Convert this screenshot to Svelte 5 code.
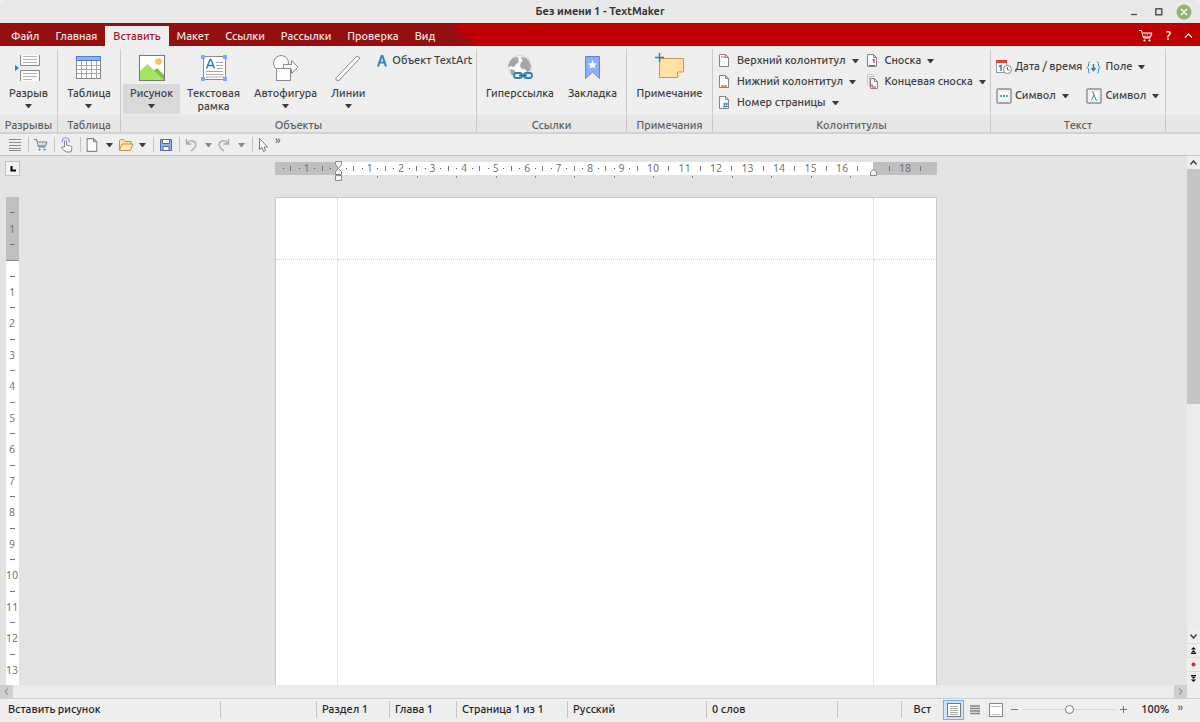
<script>
  const menus = ['Файл', 'Главная', 'Вставить', 'Макет', 'Ссылки', 'Рассылки', 'Проверка', 'Вид'];
  let active = $state('Вставить');
  let zoom = $state(100);
  let height = $state(722);

  const cm = 31.5;
  const hNumbers = [-1, 1, 2, 3, 4, 5, 6, 7, 8, 9, 10, 11, 12, 13, 14, 15, 16, 18];
  const hHalves = Array.from({ length: 21 }, (_, i) => i - 1.5);
  const hDots = [-1.75];
  for (let i = -1; i < 10; i++) {
    hDots.push(i - 0.25, i + 0.25);
  }
  const tabStops = Array.from({ length: 13 }, (_, i) => (i + 1) * 1.25);

  // only the numbers that fit into the visible part of the page
  let rows = $derived(Math.max(1, Math.floor((height - 308) / cm)));
  let vNumbers = $derived(Array.from({ length: rows }, (_, i) => i + 1));

  const cells = [
    { text: 'Вставить рисунок', w: 221 },
    { text: '', w: 96 },
    { text: 'Раздел 1', w: 73 },
    { text: 'Глава 1', w: 67 },
    { text: 'Страница 1 из 1', w: 111 },
    { text: 'Русский', w: 139 },
    { text: '0 слов', w: 131 }
  ];
</script>

<svelte:window bind:innerHeight={height} />

{#snippet arrow()}
  <svg class="arrow" width="7" height="4" viewBox="0 0 7 4"><path d="M0 0h7L4 4H3z" fill="currentColor" /></svg>
{/snippet}

{#snippet sheet()}
  <path d="M1.500 1.500h6l3 3v9h-9z" fill="#fafafa" stroke="#858585" />
  <path d="M7.500 1.500v3h3" fill="none" stroke="#858585" />
{/snippet}

{#snippet cart(wheel)}
  <path d="M1 2.500h2.500l2 7.500h7M4.500 5h9.500l-1.500 4H5.300" fill="none" stroke="currentColor" />
  <path d="M7 5v4M9.500 5v4M12 5v4" stroke="currentColor" stroke-width=".4" />
  <circle cx="6.500" cy="12.500" r="1.100" fill={wheel} /><circle cx="11.500" cy="12.500" r="1.100" fill={wheel} />
{/snippet}

{#snippet bigIcon(name)}
  <svg class="big-icon" width="30" height="30" viewBox="0 0 30 30">
    {#if name === 'break'}
      <path d="M6.500 2v10.500h19V2M6.500 28V17.500h19V28" fill="#fbfbfb" stroke="#8a8a8a" />
      <path d="M9 3.500h14M9 6.500h14M9 9.500h14M9 20.500h14M9 23.500h14M9 26.500h9" stroke="#b5b5b5" />
      <path d="M1 12l4 3-4 3z" fill="#2b80b9" />
    {:else if name === 'table'}
      <rect x="2.500" y="3.500" width="24" height="22" fill="#fff" stroke="#858585" />
      <path d="M3 12.500h23M3 16.500h23M3 20.500h23M7.500 8v17M12.500 8v17M17.500 8v17M22.500 8v17" stroke="#a8a8a8" />
      <rect x="2.500" y="3.500" width="24" height="4" fill="#8bb1fb" stroke="#527ccc" />
    {:else if name === 'picture'}
      <rect x="2.500" y="2.500" width="25" height="25" fill="#fff" stroke="#777" />
      <circle cx="21.500" cy="8.500" r="3.200" fill="#ffbf4d" />
      <path d="M15 19l5-4 7 7v5H15z" fill="#82be4e" />
      <path d="M3 18l7.500-7L27 27H3z" fill="#a3e563" />
    {:else if name === 'frame'}
      <rect x="4.500" y="3.500" width="22" height="23" fill="#fff" stroke="#8a8a8a" />
      <path d="M17 9.500h7M17 12.500h7M18 15.500h6M7 18.500h17M7 21.500h17M7 24h17" stroke="#aaa" />
      <path d="M7.500 15.500L11 6.500h1l3.500 9M9 12.500h5" fill="none" stroke="#2b80b9" stroke-width="1.500" />
      <g fill="#7fa7ff"><rect x="2" y="2" width="4" height="4" /><rect x="24" y="2" width="4" height="4" /><rect x="2" y="24" width="4" height="4" /><rect x="24" y="24" width="4" height="4" /></g>
    {:else if name === 'shape'}
      <circle cx="10" cy="10" r="7.500" fill="#fdfdfd" stroke="#8a8a8a" />
      <path d="M12.500 11.500h8v-4l6.500 6.500-6.500 6.500v-4h-8z" fill="#fdfdfd" stroke="#8a8a8a" />
      <rect x="5.500" y="15.500" width="14" height="12" fill="#fdfdfd" stroke="#8a8a8a" />
    {:else if name === 'lines'}
      <path d="M3 25L24 3l3 2L6 27.500l-3-.5z" fill="#fff" stroke="#8a8a8a" />
    {:else if name === 'link'}
      <circle cx="15" cy="14" r="11.500" fill="#f9f9f9" stroke="#d5d5d5" />
      <path d="M5 8l3-3 4-1 2 1-1 2 1 2-3 2-1 2-2 1-2-1-2 1-1-1zM16 4l5 1 3 3 2 5-1 5-3 1-2-3-3 0-2-3 1-4 2-1-2-3zM5 16l4 1 2 3-2 3-3-2z" fill="#a6a6a6" />
      <g fill="#eee" stroke="#2b80b9" stroke-width="1.800"><rect x="9" y="20" width="8" height="5" rx="2.500" /><rect x="19" y="20" width="8" height="5" rx="2.500" /></g>
      <path d="M14 22.500h8" stroke="#1b65a0" stroke-width="1.600" />
    {:else if name === 'bookmark'}
      <path d="M8.500 3.500h14v22l-7-6.500-7 6.500z" fill="#8bafff" stroke="#6a86bd" />
      <path d="M15.500 7l1.300 3.200 3.400.2-2.600 2.100.9 3.300-3-1.800-3 1.800.9-3.300-2.600-2.100 3.400-.2z" fill="#fff" />
    {:else if name === 'note'}
      <path d="M4.500 5.500h24v13l-6 6h-18z" fill="#ffe2a3" stroke="#cb9551" />
      <path d="M22.500 24.500v-5.500h6" fill="#fff0cd" stroke="#cb9551" />
      <path d="M0 4.500h9M4.500 0v9" stroke="#2b80b9" stroke-width="1.500" />
    {/if}
  </svg>
{/snippet}

{#snippet big(name, label, drop = false, second = '')}
  <button class="big" class:hot={name === 'picture'}>
    {@render bigIcon(name)}
    <span class="cap">
      <span>{label}</span>
      {#if second}<span>{second}</span>{/if}
      {#if drop}{@render arrow()}{/if}
    </span>
  </button>
{/snippet}

{#snippet small(name, label, drop = true)}
  <button class="small">
    <svg width="16" height="16" viewBox="0 0 16 16">
      {#if name === 'header'}
        {@render sheet()}<path d="M3 4h4" stroke="#ff8d60" stroke-width="1.500" />
      {:else if name === 'footer'}
        {@render sheet()}<path d="M3 12h6" stroke="#ff8d60" stroke-width="2" />
      {:else if name === 'number'}
        {@render sheet()}<path d="M7 7.500l-1 5M9 7.500l-1 5M5 9h5M5 11.500h5" stroke="#2b80b9" stroke-width=".9" />
      {:else if name === 'footnote'}
        {@render sheet()}<path d="M6.500 7l1.500-.5V10M3 12.500h6" fill="none" stroke="#d92b2b" stroke-width="1.200" />
      {:else if name === 'endnote'}
        <path d="M1.500 11V.500h5l1 1" fill="none" stroke="#ccc" />
        <path d="M3.500 13V2.500h5" fill="none" stroke="#bbb" />
        <path d="M4.500 4.500h4l3 3v7h-7z" fill="#fafafa" stroke="#858585" /><path d="M8.500 4.500v3h3" fill="none" stroke="#858585" />
        <path d="M6 10v3h4" fill="none" stroke="#d92b2b" />
      {:else if name === 'date'}
        <rect x=".5" y="1.500" width="10" height="12" fill="#fff" stroke="#999" /><path d="M0 1h11v3H0z" fill="#d8433c" />
        <path d="M3 7.500l2-1V12" fill="none" stroke="#2b80b9" stroke-width="1.400" />
        <circle cx="11.500" cy="10.500" r="4" fill="#fff" stroke="#858585" /><path d="M11.500 8v3h2" fill="none" stroke="#2b80b9" />
      {:else if name === 'field'}
        <path d="M4 3H3.500q-1 0-1 1.500V7L1 8.500 2.500 10v2.500q0 1.500 1 1.500H4M11 3h.5q1 0 1 1.500V7L14 8.500 12.500 10v2.500q0 1.500-1 1.500H11" fill="none" stroke="#3a87bd" />
        <path d="M7.500 5v6M5.500 9l2 2.500 2-2.500" fill="none" stroke="#2b80b9" stroke-width="1.500" />
      {:else if name === 'dots' || name === 'lambda'}
        <rect x="1" y="1" width="14" height="14" rx="1" fill="#fff" stroke="#8a8a8a" stroke-width="1.400" /><rect x="3" y="3" width="10" height="10" fill="#fff" stroke="#ccc" stroke-width=".6" />
        {#if name === 'dots'}<path d="M4 8h2M7 8h2M10 8h2" stroke="#2b80b9" stroke-width="1.600" />
        {:else}<path d="M6 4h1l3 8h1M8 7l-2.500 5" fill="none" stroke="#2b80b9" />{/if}
      {/if}
    </svg>
    <span>{label}</span>
    {#if drop}{@render arrow()}{/if}
  </button>
{/snippet}

<div class="app">
  <header class="title">
    <h1>Без имени 1 - TextMaker</h1>
    <div class="window-buttons">
      <button aria-label="Свернуть"><svg width="8" height="16" viewBox="0 0 8 16"><path d="M1 10.500h6" stroke="#444" stroke-width="1.200" /></svg></button>
      <button aria-label="Развернуть"><svg width="8" height="16" viewBox="0 0 8 16"><rect x=".8" y="4.800" width="6" height="6" fill="none" stroke="#333" stroke-width="1.200" /></svg></button>
      <button aria-label="Закрыть"><svg width="16" height="16" viewBox="0 0 16 16"><circle cx="8" cy="8" r="7.500" fill="#92b372" /><path d="M5 5l6 6M11 5l-6 6" stroke="#fff" stroke-width="1.300" /></svg></button>
    </div>
  </header>

  <nav class="menu">
    <div class="tabs">
      {#each menus as m}
        <button class:active={active === m} onclick={() => (active = m)}>{m}</button>
      {/each}
    </div>
    <div class="menu-right">
      <button aria-label="Магазин"><svg width="15" height="15" viewBox="0 0 15 15">{@render cart('#fff')}</svg></button>
      <button class="help">?</button>
      <button aria-label="Скрыть ленту"><svg width="9" height="9" viewBox="0 0 9 9"><path d="M1 6.500L4.500 3 8 6.500" fill="none" stroke="#fff" stroke-width="1.200" /></svg></button>
    </div>
  </nav>

  <div class="ribbon">
    <section class="group g-break">
      <div class="tools">{@render big('break', 'Разрыв', true)}</div>
      <h2>Разрывы</h2>
    </section>
    <section class="group g-table">
      <div class="tools">{@render big('table', 'Таблица', true)}</div>
      <h2>Таблица</h2>
    </section>
    <section class="group g-objects">
      <div class="tools">
        {@render big('picture', 'Рисунок', true)}
        {@render big('frame', 'Текстовая', false, 'рамка')}
        {@render big('shape', 'Автофигура', true)}
        {@render big('lines', 'Линии', true)}
        <div class="stack">
          <button class="small">
            <svg width="14" height="14" viewBox="0 0 14 14"><path d="M3 12.500L6.500 2h1L11 12.500M4.500 8.500h5" fill="none" stroke="#3988bd" stroke-width="2.200" /></svg>
            <span>Объект TextArt</span>
          </button>
        </div>
      </div>
      <h2>Объекты</h2>
    </section>
    <section class="group g-links">
      <div class="tools">
        {@render big('link', 'Гиперссылка')}
        {@render big('bookmark', 'Закладка')}
      </div>
      <h2>Ссылки</h2>
    </section>
    <section class="group g-notes">
      <div class="tools">{@render big('note', 'Примечание')}</div>
      <h2>Примечания</h2>
    </section>
    <section class="group g-headers">
      <div class="tools">
        <div class="stack">
          {@render small('header', 'Верхний колонтитул')}
          {@render small('footer', 'Нижний колонтитул')}
          {@render small('number', 'Номер страницы')}
        </div>
        <div class="stack">
          {@render small('footnote', 'Сноска')}
          {@render small('endnote', 'Концевая сноска')}
        </div>
      </div>
      <h2>Колонтитулы</h2>
    </section>
    <section class="group g-text">
      <div class="tools">
        <div class="stack loose">
          {@render small('date', 'Дата / время', false)}
          {@render small('dots', 'Символ')}
        </div>
        <div class="stack loose">
          {@render small('field', 'Поле')}
          {@render small('lambda', 'Символ')}
        </div>
      </div>
      <h2>Текст</h2>
    </section>
    <div class="group rest"><div class="tools"></div><div class="band"></div></div>
  </div>

  <div class="quick">
    <button aria-label="Меню"><svg width="16" height="16" viewBox="0 0 16 16"><path d="M2 2.500h12M2 5.500h12M2 8.500h12M2 11.500h12M2 13.500h12" stroke="#8c8c8c" /></svg></button>
    <i></i>
    <button class="blue" aria-label="Магазин"><svg width="16" height="16" viewBox="0 0 16 16">{@render cart('#3a8bd0')}</svg></button>
    <i></i>
    <button aria-label="Сенсорный режим"><svg width="16" height="16" viewBox="0 0 16 16"><path d="M3.500 5.500a3.500 3.500 0 1 1 6.500 0" fill="none" stroke="#7fa7ff" stroke-width="1.300" /><path d="M5.500 10V4q1-1 2 0v4l4 1q1.500.5 1.500 2l-1 4H7L2.500 11q0-1.500 1.500-1z" fill="#fafafa" stroke="#858585" /></svg></button>
    <i></i>
    <button aria-label="Создать"><svg width="16" height="16" viewBox="0 0 14 15">{@render sheet()}</svg></button>
    <button class="drop" aria-label="Шаблоны">{@render arrow()}</button>
    <button aria-label="Открыть"><svg width="16" height="16" viewBox="0 0 16 16"><path d="M1.500 13V3.500l1-1h3l1.500 2h6V7" fill="#ffe2a3" stroke="#c98f47" /><path d="M1.500 13.500L4 7h11l-2.500 6.500z" fill="#ffe8b8" stroke="#c98f47" /></svg></button>
    <button class="drop" aria-label="Последние файлы">{@render arrow()}</button>
    <i></i>
    <button aria-label="Сохранить"><svg width="16" height="16" viewBox="0 0 16 16"><path d="M2.500 2.500h11v11h-11z" fill="#8bafff" stroke="#4b6fae" /><path d="M4.500 2.500h7v4h-7zM5 9.500h6v4H5z" fill="#fff" stroke="#667" /></svg></button>
    <i></i>
    <button class="off" aria-label="Отменить"><svg width="16" height="16" viewBox="0 0 16 16"><path d="M2.500 2v5h5M3 6.500q3-4 7-2t0 7L7 14" fill="none" stroke="#aaa" stroke-width="1.400" /></svg></button>
    <button class="drop off" aria-label="Список отмены">{@render arrow()}</button>
    <button class="off" aria-label="Вернуть"><svg width="16" height="16" viewBox="0 0 16 16"><path d="M11.500 2v5h-5M11 6.500q-3-4-7-2t0 7L7 14" fill="none" stroke="#aaa" stroke-width="1.400" /></svg></button>
    <button class="drop off" aria-label="Список возврата">{@render arrow()}</button>
    <i></i>
    <button aria-label="Выделение"><svg width="16" height="16" viewBox="0 0 16 16"><path d="M2.500 1.500v11l2.500-2 1.500 4 2-1-1.500-3.500h3.500z" fill="#fff" stroke="#777" /></svg></button>
    <button class="more">»</button>
  </div>

  <div class="work">
    <div class="canvas">
      <div class="top">
        <button class="tab-kind" aria-label="Тип табуляции"><svg width="13" height="13" viewBox="0 0 13 13"><path d="M5.500 4v4.500H10" fill="none" stroke="#000" stroke-width="2" /></svg></button>
        <svg class="h-ruler" width="662" height="26" viewBox="0 0 662 26">
          <rect x="0" y="5" width="662" height="13" fill="#bfbfbf" />
          <rect x="63" y="5" width="535" height="13" fill="#fff" />
          {#each hDots as d}<rect x={Math.round(63 + d * cm)} y="11" width="1" height="1" fill="#555" />{/each}
          {#each hHalves as d}<rect x={Math.round(62.5 + d * cm)} y="9" width="1" height="5" fill="#777" />{/each}
          {#each hNumbers as n}<text x={63 + n * cm} y="15">{Math.abs(n)}</text>{/each}
          {#each tabStops as t}<rect x={Math.round(63 + t * cm)} y="19" width="1" height="2" fill="#888" />{/each}
          <path d="M60.500 4.500h6v3l-3 4-3-4zM63.500 11.500l3 3v3h-6v-3zM60.500 18.500h6v5h-6z" fill="#f4f4f4" stroke="#8a8a8a" />
          <path d="M595.500 15.500l3-3.500 3 3.500v3h-6z" fill="#f4f4f4" stroke="#8a8a8a" />
        </svg>
      </div>
      <div class="bottom">
        <div class="v-holder">
          <svg class="v-ruler" width="13" height="64" viewBox="0 0 13 64">
            <rect x="0" y="0" width="13" height="64" fill="#bfbfbf" />
            <rect x="0" y="63" width="13" height="1" fill="#8a8a8a" />
            <rect x="4" y="15" width="5" height="1" fill="#777" />
            <rect x="4" y="47" width="5" height="1" fill="#777" />
            <text x="6" y="36">1</text>
          </svg>
          <svg class="v-ruler white" width="13" height={rows * cm + 14} viewBox="0 0 13 {rows * cm + 14}">
            {#each vNumbers as n}
              <rect x="4" y={Math.round(n * cm - 17)} width="5" height="1" fill="#777" />
              <text x="6" y={3 + n * cm}>{n}</text>
            {/each}
          </svg>
        </div>
        <div class="page" contenteditable="true" role="textbox" aria-label="Документ" tabindex="0">
          <span></span><span></span><span></span>
          <span></span><span></span><span></span>
        </div>
      </div>
    </div>
    <div class="v-scroll">
      <button aria-label="Вверх"><svg width="9" height="9" viewBox="0 0 9 9"><path d="M1.500 6.500l3-3.500 3 3.500" fill="none" stroke="#444" stroke-width="1.500" /></svg></button>
      <div class="track"><div class="thumb"></div></div>
      <button aria-label="Вниз"><svg width="9" height="9" viewBox="0 0 9 9"><path d="M1.500 2.500l3 3.500 3-3.500" fill="none" stroke="#444" stroke-width="1.500" /></svg></button>
      <button class="jump" aria-label="Назад"><svg width="7" height="7" viewBox="0 0 7 7"><path d="M3.500 0L6 2.500H1zM3.500 3L6 5.500H1zM1 6h5v1H1z" /></svg></button>
      <button class="jump" aria-label="Объект"><svg width="7" height="7" viewBox="0 0 7 7"><circle cx="3.500" cy="3.500" r="2" fill="#d9262b" /></svg></button>
      <button class="jump" aria-label="Далее"><svg width="7" height="7" viewBox="0 0 7 7"><path d="M1 0h5v1H1zM1 1.500h5L3.500 4zM1 4.500h5L3.500 7z" /></svg></button>
    </div>
  </div>

  <div class="h-scroll">
    <button aria-label="Влево"><svg width="9" height="9" viewBox="0 0 9 9"><path d="M6 1.500L3 4.500l3 3" fill="none" stroke="#999" stroke-width="1.200" /></svg></button>
    <div class="track"></div>
    <button aria-label="Вправо"><svg width="9" height="9" viewBox="0 0 9 9"><path d="M3 1.500l3 3-3 3" fill="none" stroke="#999" stroke-width="1.200" /></svg></button>
    <span class="corner"></span>
  </div>

  <footer class="status">
    {#each cells as c}
      <span class="cell" style="width: {c.w}px">{c.text}</span>
    {/each}
    <span class="cell grow"></span>
    <span class="ins">Вст</span>
    <button class="view on" aria-label="Обычный"><svg width="16" height="16" viewBox="0 0 16 16"><rect x="1.500" y="1.500" width="13" height="13" fill="#fff" stroke="#777" /><path d="M4 4.500h8M4 6.500h8M4 8.500h8M4 10.500h8M4 12.500h8" stroke="#aaa" /></svg></button>
    <button class="view" aria-label="Черновик"><svg width="16" height="16" viewBox="0 0 16 16"><path d="M3 4h10M3 6.500h10M3 9h10M3 11.500h10" stroke="#858585" stroke-width="1.500" /></svg></button>
    <button class="view" aria-label="Страница"><svg width="16" height="16" viewBox="0 0 16 16"><rect x="1.500" y="1.500" width="13" height="13" fill="#fff" stroke="#858585" /><path d="M3 4.500h10M4 12.500h8" stroke="#bbb" /></svg></button>
    <button class="step" aria-label="Уменьшить"><svg width="7" height="7" viewBox="0 0 7 7"><path d="M0 3.500h7" stroke="#777" /></svg></button>
    <input type="range" min="0" max="200" bind:value={zoom} aria-label="Масштаб" />
    <button class="step" aria-label="Увеличить"><svg width="7" height="7" viewBox="0 0 7 7"><path d="M0 3.500h7M3.500 0v7" stroke="#777" /></svg></button>
    <span class="percent">{zoom}%</span>
    <button class="more">»</button>
  </footer>
</div>

<style>
  :global(body) {
    background: #eee;
  }

  .app {
    display: flex;
    flex-direction: column;
    height: 100vh;
    overflow: hidden;
    font-family: "Ubuntu", "Noto Sans", "Open Sans", sans-serif;
    font-size: 11px;
    font-weight: 500;
    line-height: 13px;
    color: #3c3c3c;
    background: #eee;
  }

  .app * {
    box-sizing: border-box;
  }

  button {
    display: flex;
    align-items: center;
    justify-content: center;
    padding: 0;
    border: 0;
    background: none;
    font: inherit;
    color: inherit;
    white-space: nowrap;
  }

  svg {
    display: block;
    flex: none;
  }

  h1, h2 {
    margin: 0;
    font-size: 11px;
  }

  /* title bar */
  .title {
    display: grid;
    grid-template-columns: 1fr auto 1fr;
    align-items: center;
    flex: none;
    height: 23px;
    background: #e8e8e8;
    border-radius: 6px 6px 0 0;
  }

  .title h1 {
    grid-column: 2;
    font-weight: 600;
    color: #333;
  }

  .window-buttons {
    display: flex;
    justify-content: flex-end;
    gap: 17px;
    padding-right: 8px;
  }

  .window-buttons button:last-child {
    margin-left: -4px;
  }

  /* menu */
  .menu {
    display: flex;
    justify-content: space-between;
    flex: none;
    height: 23px;
    background: #c00000;
    border-top: 1px solid #b00000;
  }

  .tabs {
    display: flex;
    padding: 2px 32px 0 3px;
    background: #941010;
    clip-path: polygon(0 0, calc(100% - 24px) 0, 100% 100%, 0 100%);
  }

  .tabs button {
    padding: 0 8px;
    color: #f5e6e6;
  }

  .tabs .active {
    background: #eee;
    color: #a81414;
  }

  .menu-right {
    display: flex;
    gap: 13px;
    padding-right: 7px;
    color: #fff;
  }

  .help {
    font-size: 13px;
  }

  /* ribbon */
  .ribbon {
    display: flex;
    flex: none;
    height: 88px;
    padding-top: 3px;
    border-bottom: 2px solid #d2d2d2;
  }

  .group {
    display: flex;
    flex-direction: column;
    flex: none;
    border-right: 1px solid #c9c9c9;
  }

  .g-break { width: 58px; }
  .g-table { width: 63px; }
  .g-objects { width: 356px; }
  .g-links { width: 150px; }
  .g-notes { width: 86px; }
  .g-headers { width: 278px; }
  .g-text { width: 175px; }

  .rest {
    flex: 1;
    border-right: 0;
  }

  .group h2,
  .band {
    height: 17px;
    padding-top: 4px;
    background: #e6e6e6;
    font-weight: inherit;
    text-align: center;
    color: #5c5c5c;
  }

  .tools {
    display: flex;
    flex: 1;
    justify-content: center;
  }

  .big {
    flex-direction: column;
    justify-content: flex-start;
    padding-top: 4px;
  }

  .cap {
    display: flex;
    flex-direction: column;
    align-items: center;
    height: 30px;
    margin-top: 1px;
    padding: 3px 7px 0;
  }

  .cap .arrow {
    margin-top: 4px;
  }

  .hot .cap {
    background: #d9d9d9;
  }

  .g-objects .tools {
    justify-content: flex-start;
    padding-left: 2px;
  }

  .stack {
    display: flex;
    flex-direction: column;
    padding-top: 1px;
  }

  .g-objects .stack {
    margin-left: 1px;
  }

  .stack.loose {
    gap: 8px;
    padding-top: 7px;
  }

  .small {
    justify-content: flex-start;
    gap: 3px;
    height: 21px;
    padding: 0 2px;
  }

  .small .arrow {
    margin: 1px 0 0 3px;
  }

  .g-headers .tools,
  .g-text .tools {
    justify-content: flex-start;
    padding-left: 3px;
  }

  .g-headers .stack + .stack {
    margin-left: 3px;
  }

  /* quick access bar */
  .quick {
    display: flex;
    align-items: center;
    flex: none;
    height: 22px;
    padding-left: 7px;
    border-bottom: 1px solid #c4c4c4;
  }

  .quick i {
    width: 1px;
    height: 15px;
    margin: 0 4px 0 5px;
    background: #c4c4c4;
  }

  .quick .drop + i {
    margin-left: 2px;
  }

  .drop {
    width: 17px;
  }

  .blue {
    color: #6f7f8c;
  }

  .off {
    color: #888;
  }

  .more {
    align-self: flex-start;
    padding: 0 2px;
    color: #666;
  }

  /* document area */
  .work {
    display: flex;
    flex: 1;
    min-height: 0;
  }

  .canvas {
    display: flex;
    flex-direction: column;
    flex: 1;
    min-width: 0;
    background: #e3e3e3;
  }

  .top {
    display: grid;
    grid-template-columns: 25px 1fr;
    flex: none;
    height: 41px;
    padding-top: 1px;
  }

  .tab-kind {
    width: 15px;
    height: 15px;
    margin: 4px 0 0 5px;
    background: #f2f2f2;
    border: 1px solid #c2c2c2;
  }

  .h-ruler {
    margin: 0 auto;
  }

  .bottom {
    display: grid;
    grid-template-columns: 25px 1fr;
    grid-template-rows: minmax(0, 1fr);
    flex: 1;
    min-height: 0;
    overflow: hidden;
  }

  .v-holder {
    width: 13px;
    margin-left: 6px;
    background: #fff;
  }

  text {
    font-size: 11px;
    font-weight: 400;
    fill: #6c6c6c;
    text-anchor: middle;
  }

  .page {
    display: grid;
    grid-template: 62px 1fr / 62px 1fr 62px;
    width: 662px;
    height: 935px;
    margin: 0 auto;
    background: #fff;
    border: 1px solid #c8c8c8;
    outline: none;
  }

  .page span {
    border: 0 dotted #d0d0d0;
  }

  .page span:nth-child(-n + 3) {
    border-bottom-width: 1px;
  }

  .page span:not(:nth-child(3n)) {
    border-right-width: 1px;
  }

  .v-scroll {
    display: flex;
    flex-direction: column;
    width: 13px;
  }

  .v-scroll button {
    height: 13px;
    flex: none;
  }

  .v-scroll .jump {
    height: 14px;
    border-top: 1px solid #ddd;
  }

  .track {
    flex: 1;
    background: #ebebeb;
  }

  .thumb {
    height: 51%;
    background: #c4c4c4;
  }

  .h-scroll {
    display: flex;
    flex: none;
    height: 13px;
  }

  .h-scroll button {
    width: 13px;
    background: #cfcfcf;
  }

  .corner {
    width: 13px;
  }

  /* status bar */
  .status {
    display: flex;
    align-items: center;
    flex: none;
    height: 24px;
    padding-bottom: 2px;
    border-top: 1px solid #cfcfcf;
    color: #222;
  }

  .cell {
    flex: none;
    height: 17px;
    padding-left: 5px;
    line-height: 16px;
    white-space: nowrap;
    border-right: 1px solid #c4c4c4;
  }

  .cell:first-child {
    padding-left: 8px;
  }

  .cell.grow {
    flex: 1;
  }

  .ins {
    padding: 0 12px;
  }

  .view {
    width: 21px;
    height: 20px;
  }

  .view.on {
    background: #cfe3fa;
    border: 1px solid #78aee8;
  }

  .step {
    width: 17px;
  }

  input[type="range"] {
    appearance: none;
    width: 92px;
    height: 12px;
    margin: 0;
    background: linear-gradient(#d6d6d6, #d6d6d6) center / 100% 1px no-repeat;
  }

  input[type="range"]::-webkit-slider-thumb {
    appearance: none;
    width: 9px;
    height: 9px;
    border: 1px solid #777;
    border-radius: 50%;
    background: #fff;
  }

  .percent {
    padding-left: 9px;
  }

  .status .more {
    padding: 2px 17px 0 8px;
  }
</style>
